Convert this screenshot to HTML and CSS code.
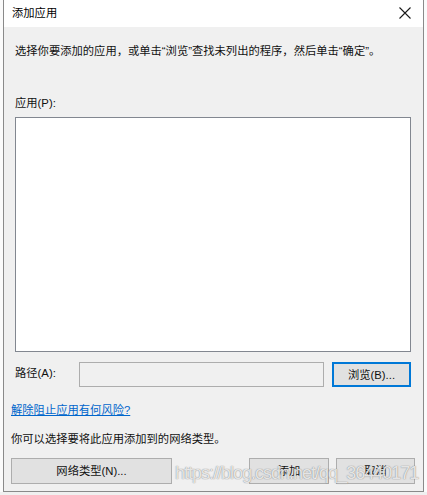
FILE: index.html
```html
<!DOCTYPE html>
<html lang="zh-CN">
<head>
<meta charset="utf-8">
<title>添加应用</title>
<link rel="stylesheet" href="styles.css">
</head>
<body>
<div class="screen">
  <div class="side side-left"></div>
  <div class="dialog">
    <div class="titlebar">
      <span class="title">添加应用</span>
      <span class="close" aria-label="关闭">
        <svg width="12" height="12" viewBox="0 0 12 12"><path d="M0.5 0.5 L11.5 11.5 M11.5 0.5 L0.5 11.5" stroke="#1a1a1a" stroke-width="1.1" fill="none"/></svg>
      </span>
    </div>
    <div class="content">
      <p class="intro indent">选择你要添加的应用，或单击“浏览”查找未列出的程序，然后单击“确定”。</p>
      <p class="label-apps indent">应用(P):</p>
      <div class="listbox indent"></div>
      <div class="path-row indent">
        <span class="path-label">路径(A):</span>
        <div class="path-input"></div>
        <button class="btn btn-browse">浏览(B)...</button>
      </div>
      <a class="risk-link" href="#">解除阻止应用有何风险?</a>
      <p class="net-text">你可以选择要将此应用添加到的网络类型。</p>
      <div class="button-row">
        <button class="btn btn-network">网络类型(N)...</button>
        <div class="spacer"></div>
        <button class="btn btn-add">添加</button>
        <button class="btn btn-cancel">取消</button>
      </div>
    </div>
    <div class="watermark">https://blog.csdn.net/qq_36440171</div>
  </div>
  <div class="side side-right"></div>
</div>
</body>
</html>
```

FILE: styles.css
```css
html, body {
  margin: 0;
  padding: 0;
}
body {
  width: 427px;
  height: 495px;
  overflow: hidden;
  background: #f0f0f0;
  font-family: "Liberation Sans", "Noto Sans CJK SC", sans-serif;
  font-size: 11.3px;
  color: #111;
}
.screen {
  display: flex;
  height: 492px;
}
.side {
  width: 3px;
  background: #fbfbfb;
}
.side-right {
  width: 3px;
}
.dialog {
  position: relative;
  width: 419px;
  border-left: 1px solid #8a8a8a;
  border-right: 1px solid #8a8a8a;
  border-bottom: 1px solid #8a8a8a;
  display: flex;
  flex-direction: column;
  background: #f0f0f0;
}
.titlebar {
  height: 27px;
  background: #ffffff;
  display: flex;
  align-items: center;
  justify-content: space-between;
  padding: 0 8px 0 8px;
}
.title {
  font-size: 11.3px;
  line-height: 16px;
  color: #000;
  padding-bottom: 1px;
}
.close {
  display: flex;
  width: 12px;
  height: 12px;
  margin-right: 4px;
  margin-bottom: 1px;
}
.content {
  flex: 1;
  padding: 16px 8px 0 7px;
  display: flex;
  flex-direction: column;
}
.indent {
  margin-left: 4px;
}
p {
  margin: 0;
  line-height: 16px;
}
.intro {
  color: #111;
}
.label-apps {
  margin-top: 36px;
}
.listbox {
  margin-top: 6px;
  width: 394px;
  height: 233px;
  background: #ffffff;
  border: 1px solid #828790;
}
.path-row {
  margin-top: 10px;
  display: flex;
  align-items: center;
  height: 25px;
}
.path-label {
  width: 64px;
  line-height: 16px;
  margin-bottom: 3px;
}
.path-input {
  width: 243px;
  height: 23px;
  border: 1px solid #adadad;
  background: #f0f0f0;
}
.btn {
  font-family: "Liberation Sans", "Noto Sans CJK SC", sans-serif;
  font-size: 11.3px;
  color: #111;
  background: #e1e1e1;
  border: 1px solid #adadad;
  padding: 0;
  margin: 0;
  line-height: 16px;
}
.btn-browse {
  margin-left: 8px;
  width: 79px;
  height: 25px;
  border: 2px solid #0078d7;
}
.risk-link {
  margin-top: 15px;
  line-height: 16px;
  color: #0066cc;
  text-decoration: underline;
  align-self: flex-start;
}
.net-text {
  margin-top: 13px;
}
.button-row {
  margin-top: 11px;
  display: flex;
  height: 26px;
}
.button-row .btn {
  height: 26px;
}
.btn-network {
  width: 161px;
}
.spacer {
  flex: 1;
}
.btn-add {
  width: 80px;
}
.btn-cancel {
  width: 79px;
  margin-left: 7px;
}
.watermark {
  position: absolute;
  left: 171px;
  top: 462px;
  font-family: "Liberation Sans", sans-serif;
  font-size: 18px;
  letter-spacing: -1px;
  line-height: 22px;
  color: rgba(255, 255, 255, 0.8);
  text-shadow: 0 0 1px rgba(110, 110, 110, 0.7), 0 0 1px rgba(110, 110, 110, 0.5);
  white-space: nowrap;
  pointer-events: none;
}
```
